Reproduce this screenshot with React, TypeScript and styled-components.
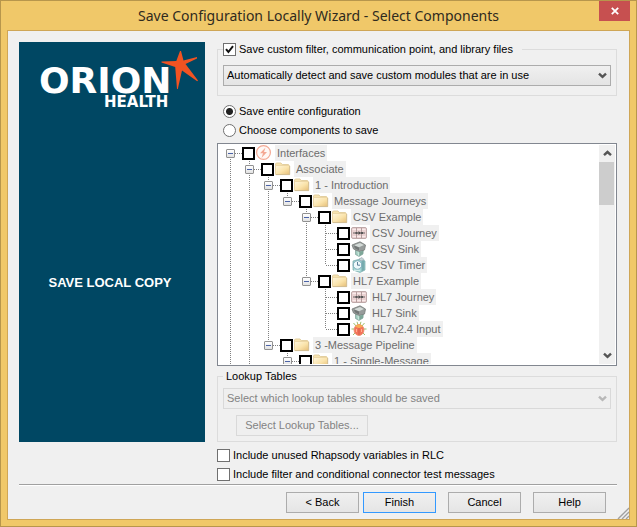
import React, { useId } from 'react';
import styled, { createGlobalStyle, css } from 'styled-components';

const GlobalStyle = createGlobalStyle`
  * { box-sizing: border-box; }
  body {
    margin: 0;
    background: #f0c869;
    color: #000;
    font: 11px/13px "Liberation Sans", Arial, sans-serif;
  }
  button, select, input { font: inherit; margin: 0; }
`;

const WindowFrame = styled.div`
  min-height: 100vh;
  display: flex;
  flex-direction: column;
  background: #f0c869;
  border: 1px solid #b7964c;
`;

const TitleBar = styled.header`
  display: grid;
  grid-template-columns: 31px 1fr 31px;
  height: 29px;
  padding: 0 6px;
`;

const Title = styled.h1`
  grid-column: 2;
  margin: 0;
  font: 400 14px/29px "Noto Sans", "Open Sans", sans-serif;
  color: #2f2a1e;
  text-align: center;
  white-space: nowrap;
`;

const CloseButton = styled.button`
  height: 20px;
  padding: 0;
  border: 0;
  background: #c75050;
  display: grid;
  place-items: center;
`;

const Client = styled.main`
  flex: 1;
  display: flex;
  flex-direction: column;
  margin: 0 6px 6px;
  padding: 11px 0 0 11px;
  border: 1px solid #cfa656;
  background: #f0f0f0;
`;

const Body = styled.div`
  flex: 1;
  display: grid;
  grid-template-columns: 186px minmax(0, 1fr);
  grid-template-rows: 1fr auto;
  column-gap: 12px;
  padding-right: 12px;
`;

const Banner = styled.aside`
  background: #004763;
  color: #fff;
  display: flex;
  flex-direction: column;
  align-items: center;
`;

const BannerText = styled.h2`
  margin: 163px 4px 0 0;
  font: 700 13px/16px "Liberation Sans", Arial, sans-serif;
`;

const Options = styled.div`
  display: flex;
  flex-direction: column;
  min-height: 0;
`;

const Group = styled.fieldset<{ $compact?: boolean }>`
  min-width: 0;
  margin: 0;
  padding: ${(p) => (p.$compact ? '5px' : '9px 5px')};
  border: 1px solid #dcdcdc;
`;

const Legend = styled.legend<{ $wide?: boolean }>`
  display: flex;
  align-items: flex-end;
  height: ${(p) => (p.$wide ? '14px' : '13px')};
  padding: ${(p) => (p.$wide ? '0 9px 0 0' : '0 3px')};
`;

const ChoiceRow = styled.div<{ $tall?: boolean; $inset?: boolean }>`
  display: flex;
  align-items: center;
  gap: 3px;
  height: ${(p) => (p.$tall ? '19px' : '13px')};
  padding-left: ${(p) => (p.$inset ? '6px' : '0')};
`;

const Tick = styled.input`
  appearance: none;
  flex: none;
  width: 13px;
  height: 13px;
  border: 1px solid #707070;
  background: #fff;
  &:checked {
    background: #fff
      url("data:image/svg+xml,%3Csvg xmlns='http://www.w3.org/2000/svg' viewBox='0 0 11 11'%3E%3Cpath d='M2 5.2 4.4 8 9 2.2' fill='none' stroke='%23111' stroke-width='2'/%3E%3C/svg%3E");
  }
`;

const Radio = styled.input`
  appearance: none;
  flex: none;
  width: 13px;
  height: 13px;
  border: 1px solid #707070;
  border-radius: 50%;
  background: #fff;
  &:checked { background: radial-gradient(circle, #222 3px, #fff 4px); }
`;

const RadioList = styled.div`
  margin: 6px 0 3px;
`;

const SelectBox = styled.div`
  display: grid;
  grid-template-columns: 1fr 17px;
  align-items: center;
  & > select { grid-area: 1 / 1 / 2 / 3; }
  & > svg { grid-area: 1 / 2; justify-self: center; pointer-events: none; }
`;

const Dropdown = styled.select`
  appearance: none;
  width: 100%;
  height: 21px;
  padding: 0 18px 0 3px;
  border: 1px solid #acacac;
  border-radius: 0;
  color: #000;
  background: linear-gradient(#f0f0f0, #e4e4e4);
  &:disabled { border-color: #d9d9d9; color: #838383; background: #efefef; opacity: 1; }
`;

const PushButton = styled.button<{ $primary?: boolean; $wide?: boolean }>`
  width: ${(p) => (p.$wide ? '132px' : '73px')};
  height: 21px;
  padding: 0;
  border: 1px solid ${(p) => (p.$primary ? '#3399ff' : '#acacac')};
  color: #000;
  background: linear-gradient(#f0f0f0, #e5e5e5);
  &:disabled { border-color: #d9d9d9; color: #838383; background: #efefef; }
`;

const LookupAction = styled.div`
  margin: 6px 0 0 13px;
`;

const TreePane = styled.div`
  flex: 1 1 200px;
  min-height: 0;
  height: 0;
  display: flex;
  margin-bottom: 4px;
  padding: 1px;
  border: 1px solid #828790;
  background: #fff;
`;

const TreeList = styled.ul`
  flex: 1;
  min-width: 0;
  margin: 0;
  padding: 0 0 0 2px;
  overflow: hidden;
  list-style: none;
`;

const TreeRow = styled.li`
  display: flex;
  align-items: center;
  height: 16px;
  white-space: nowrap;
`;

const dots = '#808080 0 1px, transparent 1px 2px';

const Guide = styled.span<{ $line: boolean }>`
  flex: none;
  width: 19px;
  height: 16px;
  background: ${(p) => (p.$line ? `repeating-linear-gradient(${dots}) 9px 0 / 1px 16px no-repeat` : 'none')};
`;

const Node = styled.span<{ $up: boolean; $down: boolean }>`
  flex: none;
  display: flex;
  align-items: center;
  width: 21px;
  height: 16px;
  padding-left: 5px;
  background:
    repeating-linear-gradient(90deg, ${dots}) 10px 8px / 11px 1px no-repeat
    ${(p) => p.$up && css`, repeating-linear-gradient(${dots}) 9px 0 / 1px 8px no-repeat`}
    ${(p) => p.$down && css`, repeating-linear-gradient(${dots}) 9px 8px / 1px 8px no-repeat`};
`;

const Expander = styled.button`
  display: grid;
  place-items: center;
  width: 9px;
  height: 9px;
  padding: 0;
  border: 1px solid #919191;
  border-radius: 1px;
  background: linear-gradient(#fff, #e2e2e2);
  &::before { content: ''; width: 5px; height: 1px; background: #4b63a7; }
`;

const TreeTick = styled.input`
  appearance: none;
  flex: none;
  width: 13px;
  height: 13px;
  border: 2px solid #000;
  background: #fff;
`;

const TreeIcon = styled.svg`
  flex: none;
  width: 16px;
  height: 16px;
  margin: 0 3px 0 1px;
`;

const TreeLabel = styled.label`
  height: 16px;
  padding: 0 2px;
  background: #f0f0f0;
  color: #6d6d6d;
  line-height: 16px;
`;

const ScrollBar = styled.div`
  flex: none;
  display: flex;
  flex-direction: column;
  width: 16px;
  background: #f0f0f0;
`;

const ScrollArrow = styled.button`
  height: 17px;
  padding: 0;
  border: 0;
  background: #f0f0f0;
  display: grid;
  place-items: center;
`;

const ScrollTrack = styled.div`
  flex: 1;
  padding-right: 1px;
`;

const ScrollThumb = styled.div`
  height: 43px;
  background: #cdcdcd;
`;

const Includes = styled.div`
  grid-column: 2;
  margin-top: 4px;
`;

const Footer = styled.footer`
  display: grid;
  grid-template-columns: 1fr 12px;
`;

const Divider = styled.hr`
  width: 100%;
  margin: 0;
  border: 0;
  border-top: 1px solid #a0a0a0;
  border-bottom: 1px solid #fff;
`;

const Buttons = styled.div`
  grid-column: 1;
  display: flex;
  justify-content: flex-end;
  gap: 12px;
  padding: 6px 11px 6px 0;
`;

const Paired = styled.div`
  display: flex;
  gap: 4px;
`;

const Grip = styled.svg`
  grid-column: 2;
  align-self: end;
  justify-self: end;
`;

function Logo() {
  return (
    <svg width="186" height="70" viewBox="0 0 186 70" role="img" aria-label="Orion Health">
      <g fill="#fff" fontFamily="'DejaVu Sans', sans-serif" fontWeight="700">
        <text x="20" y="51" fontSize="36">ORION</text>
        <text x="85" y="65" fontSize="15">HEALTH</text>
      </g>
      <path
        fill="#f15322"
        d="M161 9h1l2.500 9.500L178 15v1.500L166.500 22l12.500 16.500-.8.7L163 28.500 158.800 47h-.8l-1.800-22L142.500 20.500v-1l14.800-.5Z"
      />
    </svg>
  );
}

function Chevron({ up = false, faded = false }: { up?: boolean; faded?: boolean }) {
  return (
    <svg width="9" height="7" viewBox="0 0 9 7" aria-hidden="true">
      <path
        d={up ? 'M1 5.200 4.500 2 8 5.200' : 'M1 1.600 4.500 4.900 8 1.600'}
        fill="none"
        stroke={faded ? '#b8b8b8' : '#555'}
        strokeWidth="2.4"
      />
    </svg>
  );
}

type IconKind = 'bolt' | 'folder' | 'journey' | 'sink' | 'timer' | 'input';

function NodeIcon({ kind }: { kind: IconKind }) {
  return (
    <TreeIcon viewBox="0 0 16 16" aria-hidden="true">
      {kind === 'bolt' && (
        <>
          <circle cx="7.500" cy="7.500" r="6.900" fill="#fff8f5" stroke="#f4a994" strokeWidth="1.200" />
          <path d="M9.500 2.500 4 8.300h3L5.500 13 11 7H8Z" fill="#f4a994" />
        </>
      )}
      {kind === 'folder' && (
        <>
          <defs>
            <linearGradient id="folderFill" x1="0" y1="0" x2="1" y2="1">
              <stop offset="0" stopColor="#fff7df" />
              <stop offset=".55" stopColor="#fae3aa" />
              <stop offset="1" stopColor="#e5be78" />
            </linearGradient>
          </defs>
          <path d="M.5 3 1.300 2H6l1.200 1.500h6.300v9H.5Z" fill="#f7e3ae" stroke="#e3cfa0" />
          <path d="M.5 4.500h14v9H.5Z" fill="url(#folderFill)" stroke="#e8d29f" strokeWidth=".8" />
          <path d="M1 13.600h13.700V5" fill="none" stroke="#c9b58c" strokeWidth=".8" />
        </>
      )}
      {kind === 'journey' && (
        <>
          <rect x=".5" y="2.500" width="15" height="11" rx="1.500" fill="#ead2d2" stroke="#bfa9a9" />
          <path d="M1.500 4.500h13M1.500 11.500h13" stroke="#f9eaea" />
          <path d="M5.500 3v10M10.500 3v10" stroke="#b39d9d" />
          <path d="M2 8h12" stroke="#6b6363" />
          <path d="m9.800 8-2.300-2v4Z" fill="#444" />
          <path d="M4.500 7h2v2h-2Zm5.500 0h2v2h-2Z" fill="#555" />
        </>
      )}
      {kind === 'sink' && (
        <>
          <path d="m4.500 8 8-1-.5 6-4 2.500-3.500-2Z" fill="#9fcabd" stroke="#71928a" strokeWidth=".6" />
          <path d="M1 4 9 .8 14.500 4 13.500 9 8 10.500 2.500 8Z" fill="#979c9b" stroke="#777c7a" strokeWidth=".8" />
          <path d="m3 4.200 6-2.300L13 4 8 6.200Z" fill="#d3dad7" />
          <path d="m3 4.500 5 2v3L3.800 7.300Z" fill="#717675" />
          <path d="m8.500 11 3.500-1.200V13l-3.500 1.800Z" fill="#7da698" />
          <path d="m7 10.500.5 4" stroke="#d3eee4" />
        </>
      )}
      {kind === 'timer' && (
        <>
          <path d="m2 4 7-2 5 2v9l-5 2.500L2 13Z" fill="#a4d7d6" stroke="#76a7a8" strokeWidth=".7" />
          <path d="m10.500 4 3-.5v9.500l-3 1.500Z" fill="#78abae" />
          <path d="m8 2 3-1.500 2 2L10 4Z" fill="#c6d5d5" stroke="#8995a6" strokeWidth=".5" />
          <circle cx="6.500" cy="8" r="4.300" fill="#eef8fa" stroke="#76a7b5" />
          <path d="M6.500 5v3.200h2.600" fill="none" stroke="#5c7f98" />
          <path d="M3 13.300h6" stroke="#dff4f1" />
        </>
      )}
      {kind === 'input' && (
        <>
          <path d="m2.500 2 3 3.500M13.500 2l-3 3.500M.5 8h4M15.500 8h-4M2 14l3-3M14 14l-3-3M6 .8l1 3M10 .8l-1 3" stroke="#9cc069" />
          <ellipse cx="8" cy="9" rx="4.900" ry="5.400" fill="#f4735b" stroke="#ec8c6e" />
          <path d="M4 5.500Q8 1 12 5.500L8 7.200Z" fill="#f6ad55" />
          <path d="M8 7v7" stroke="#d55c4b" />
          <path d="M5.500 8v3M10.500 8v3" stroke="#ffb292" />
        </>
      )}
    </TreeIcon>
  );
}

interface TreeItem {
  label: string;
  icon: IconKind;
  depth: number;
  guides: number[];
  first?: boolean;
  last?: boolean;
}

const items: TreeItem[] = [
  { label: 'Interfaces', icon: 'bolt', depth: 0, guides: [], first: true },
  { label: 'Associate', icon: 'folder', depth: 1, guides: [0] },
  { label: '1 - Introduction', icon: 'folder', depth: 2, guides: [0, 1] },
  { label: 'Message Journeys', icon: 'folder', depth: 3, guides: [0, 1, 2], last: true },
  { label: 'CSV Example', icon: 'folder', depth: 4, guides: [0, 1, 2] },
  { label: 'CSV Journey', icon: 'journey', depth: 5, guides: [0, 1, 2, 4] },
  { label: 'CSV Sink', icon: 'sink', depth: 5, guides: [0, 1, 2, 4] },
  { label: 'CSV Timer', icon: 'timer', depth: 5, guides: [0, 1, 2, 4], last: true },
  { label: 'HL7 Example', icon: 'folder', depth: 4, guides: [0, 1, 2], last: true },
  { label: 'HL7 Journey', icon: 'journey', depth: 5, guides: [0, 1, 2] },
  { label: 'HL7 Sink', icon: 'sink', depth: 5, guides: [0, 1, 2] },
  { label: 'HL7v2.4 Input', icon: 'input', depth: 5, guides: [0, 1, 2], last: true },
  { label: '3 -Message Pipeline', icon: 'folder', depth: 2, guides: [0, 1], last: true },
  { label: '1 - Single-Message', icon: 'folder', depth: 3, guides: [0, 1] },
];

function TreeEntry({ item }: { item: TreeItem }) {
  const id = useId();
  const branch = item.icon === 'folder' || item.icon === 'bolt';
  return (
    <TreeRow>
      {Array.from({ length: item.depth }, (_, level) => (
        <Guide key={level} $line={item.guides.includes(level)} />
      ))}
      <Node $up={!item.first} $down={!item.last}>
        {branch && <Expander type="button" aria-expanded="true" aria-label={`Collapse ${item.label}`} />}
      </Node>
      <TreeTick type="checkbox" id={id} />
      <NodeIcon kind={item.icon} />
      <TreeLabel htmlFor={id}>{item.label}</TreeLabel>
    </TreeRow>
  );
}

export default function App() {
  return (
    <>
      <GlobalStyle />
      <WindowFrame>
        <TitleBar>
          <Title>Save Configuration Locally Wizard - Select Components</Title>
          <CloseButton type="button" aria-label="Close">
            <svg width="8" height="8" viewBox="0 0 8 8" aria-hidden="true">
              <path d="m.8.8 6.400 6.400M7.200.8.8 7.200" stroke="#fff" strokeWidth="1.800" />
            </svg>
          </CloseButton>
        </TitleBar>
        <Client>
          <Body>
            <Banner>
              <Logo />
              <BannerText>SAVE LOCAL COPY</BannerText>
            </Banner>
            <Options>
              <Group>
                <Legend $wide>
                  <ChoiceRow>
                    <Tick type="checkbox" id="custom" defaultChecked />
                    <label htmlFor="custom">Save custom filter, communication point, and library files</label>
                  </ChoiceRow>
                </Legend>
                <SelectBox>
                  <Dropdown aria-label="Custom modules">
                    <option>Automatically detect and save custom modules that are in use</option>
                  </Dropdown>
                  <Chevron />
                </SelectBox>
              </Group>
              <RadioList>
                <ChoiceRow $tall $inset>
                  <Radio type="radio" name="scope" id="entire" defaultChecked />
                  <label htmlFor="entire">Save entire configuration</label>
                </ChoiceRow>
                <ChoiceRow $tall $inset>
                  <Radio type="radio" name="scope" id="choose" />
                  <label htmlFor="choose">Choose components to save</label>
                </ChoiceRow>
              </RadioList>
              <TreePane>
                <TreeList>
                  {items.map((item, i) => (
                    <TreeEntry key={i} item={item} />
                  ))}
                </TreeList>
                <ScrollBar>
                  <ScrollArrow type="button" aria-label="Scroll up"><Chevron up /></ScrollArrow>
                  <ScrollTrack><ScrollThumb /></ScrollTrack>
                  <ScrollArrow type="button" aria-label="Scroll down"><Chevron /></ScrollArrow>
                </ScrollBar>
              </TreePane>
              <Group $compact>
                <Legend>Lookup Tables</Legend>
                <SelectBox>
                  <Dropdown disabled aria-label="Lookup tables">
                    <option>Select which lookup tables should be saved</option>
                  </Dropdown>
                  <Chevron faded />
                </SelectBox>
                <LookupAction>
                  <PushButton type="button" disabled $wide>Select Lookup Tables...</PushButton>
                </LookupAction>
              </Group>
            </Options>
            <Includes>
              <ChoiceRow $tall>
                <Tick type="checkbox" id="unused" />
                <label htmlFor="unused">Include unused Rhapsody variables in RLC</label>
              </ChoiceRow>
              <ChoiceRow $tall>
                <Tick type="checkbox" id="tests" />
                <label htmlFor="tests">Include filter and conditional connector test messages</label>
              </ChoiceRow>
            </Includes>
          </Body>
          <Footer>
            <Divider />
            <Buttons>
              <Paired>
                <PushButton type="button">&lt; Back</PushButton>
                <PushButton type="button" $primary>Finish</PushButton>
              </Paired>
              <PushButton type="button">Cancel</PushButton>
              <PushButton type="button">Help</PushButton>
            </Buttons>
            <Grip width="12" height="12" viewBox="0 0 12 12" aria-hidden="true">
              <path d="M1 12 12 1M5 12l7-7M9 12l3-3" stroke="#a0a0a0" strokeWidth="1.400" />
            </Grip>
          </Footer>
        </Client>
      </WindowFrame>
    </>
  );
}
